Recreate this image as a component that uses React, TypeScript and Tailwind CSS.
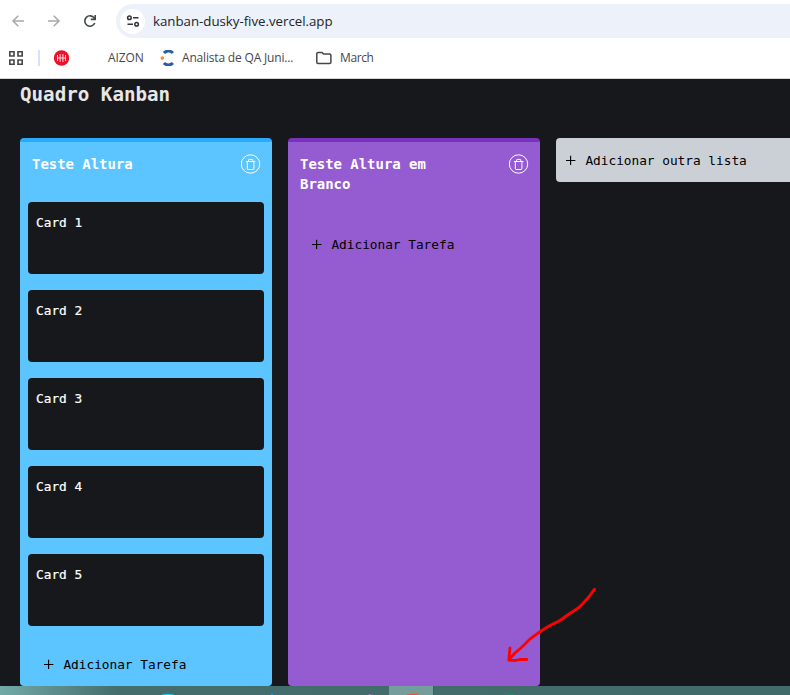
import type { ReactNode } from 'react';

const ui = "font-['Open_Sans','Noto_Sans',sans-serif]";

function TrashButton() {
  return (
    <button aria-label="Excluir lista" className="h-5 w-5 shrink-0 text-white">
      <svg width="20" height="20" viewBox="0 0 20 20" fill="none" stroke="currentColor">
        <circle cx="9.5" cy="10" r="9.2" />
        <path d="M5 7.5h9.4M6.3 7.5v7.2q0 .8.8.8h5q.8 0 .8-.8V7.5M7.6 7.3V6q0-.6.6-.6h3q.6 0 .6.6v1.3" strokeLinejoin="round" />
      </svg>
    </button>
  );
}

function AddLabel({ children }: { children: ReactNode }) {
  return (
    <span className="flex items-center text-[12.8px] leading-5 tracking-[-0.02px] text-black">
      <svg width="10" height="10" viewBox="0 0 10 10" className="mr-[9.4px] shrink-0" stroke="currentColor" strokeWidth="1.1">
        <path d="M0 5.5h9.4M4.6 .8v9.2" />
      </svg>
      <span className="pt-0.5 whitespace-pre">{children}</span>
    </span>
  );
}

function Column({ title, cards, tone }: { title: string; cards: string[]; tone: string }) {
  return (
    <section className={`flex h-[548px] w-[252px] shrink-0 flex-col rounded-[4px] border-t-4 ${tone}`}>
      <header className="flex items-start justify-between pt-3 pr-[11px] pl-3">
        <h2 className="w-[180px] text-[14px] leading-5 font-bold tracking-[-0.04px] text-white">{title}</h2>
        <TrashButton />
      </header>
      <div className="mt-7 flex flex-col gap-4 px-2">
        {cards.map((card) => (
          <article key={card} className="h-[72px] rounded-[4px] bg-[#17181c] px-2 pt-[11px] text-[12.8px] leading-5 font-medium text-white [-webkit-text-stroke:0.2px_white]">
            {card}
          </article>
        ))}
      </div>
      <button className={cards.length ? 'mt-[27px] pl-6' : 'mt-[11px] pl-6'}>
        <AddLabel>Adicionar Tarefa</AddLabel>
      </button>
    </section>
  );
}

function Browser() {
  return (
    <div className={`h-[79px] border-b border-[#d7d7d7] bg-white ${ui}`}>
      <div className="flex h-[42px] items-center">
        <svg width="116" height="42" viewBox="0 0 116 42" fill="none" strokeWidth="1.5">
          <path d="M24 21H13M18.3 15.7L13 21l5.3 5.3M48 21h11M53.7 15.7L59 21l-5.3 5.3" stroke="#a7a9ab" />
          <path d="M94.3 18.1A5.2 5.2 0 1 0 94.8 23M95.2 15v4.4h-4.4" stroke="#44474a" strokeWidth="1.6" />
        </svg>
        <div className="flex h-[34px] flex-1 items-center rounded-l-full bg-[#ecf1fa] pl-1">
          <div className="flex h-[25px] w-[25px] items-center justify-center rounded-full bg-white">
            <svg width="14" height="14" viewBox="0 0 14 14" fill="none" stroke="#303236" strokeWidth="1.5">
              <circle cx="3.4" cy="3.7" r="1.8" />
              <path d="M7 3.7h5.5M1.5 10.2H7" />
              <circle cx="10.6" cy="10.2" r="1.8" />
            </svg>
          </div>
          <span className="ml-2 text-[13.3px] leading-5 tracking-[-0.03px] text-[#222428]">kanban-dusky-five.vercel.app</span>
        </div>
      </div>
      <div className="flex h-8 items-center text-[12px] text-[#45484c]">
        <svg width="16" height="16" viewBox="0 0 16 16" className="ml-2" fill="none" stroke="#44474a" strokeWidth="1.6">
          <path d="M1.8 1.8h4.2v4.2h-4.2zM10 1.8h4.2v4.2h-4.2zM1.8 10h4.2v4.2h-4.2zM10 10h4.2v4.2h-4.2z" />
        </svg>
        <span className="ml-[14px] h-4 w-0.5 bg-[#d3e3fd]" />
        <svg width="16" height="16" viewBox="0 0 16 16" className="ml-[13px]">
          <circle cx="8.5" cy="8" r="7.7" fill="#ed1029" />
          <path d="M4.5 5v6M7.1 4v8M9.9 4v8M12.5 5v6M4.5 8h8" stroke="#fff" strokeWidth=".85" />
        </svg>
        <span className="ml-[39px] w-[36px] tracking-[-0.1px]">AIZON</span>
        <svg width="16" height="16" viewBox="0 0 16 16" className="ml-4" fill="none" stroke="#2e5ba7" strokeWidth="3">
          <path d="M3.9 3.1a6.2 6.2 0 0 1 9-.1M3.9 12.9a6.2 6.2 0 0 0 9 .1" />
          <circle cx="2.3" cy="8" r="1.8" fill="#ff8a2b" stroke="none" />
        </svg>
        <span className="ml-1.5 w-[112px] whitespace-nowrap tracking-[-0.18px]">Analista de QA Juni...</span>
        <svg width="16" height="14" viewBox="0 0 16 14" className="ml-[22px]" fill="none" stroke="#44474a" strokeWidth="1.5">
          <path d="M.8 2.6q0-1.2 1.2-1.2h4l1.6 1.7h6q1.3 0 1.3 1.2v6.9q0 1.2-1.3 1.2H2q-1.2 0-1.2-1.2z" />
        </svg>
        <span className="ml-2 tracking-[-0.4px]">March</span>
      </div>
    </div>
  );
}

export default function App() {
  return (
    <div className="relative flex h-[695px] w-[790px] flex-col overflow-hidden bg-[#17181c] font-['DejaVu_Sans_Mono','Liberation_Mono',monospace]">
      <Browser />
      <main className="h-[607px] shrink-0 pl-5">
        <h1 className="pt-[3px] text-[19.2px] leading-[26px] font-bold text-[#e7e7e7]">Quadro Kanban</h1>
        <div className="mt-[30px] flex w-[820px] items-start gap-4">
          <Column title="Teste Altura" cards={['Card 1', 'Card 2', 'Card 3', 'Card 4', 'Card 5']} tone="border-[#29aaff] bg-[#5cc4ff]" />
          <Column title="Teste Altura em Branco" cards={[]} tone="border-[#7832bd] bg-[#955bd1]" />
          <button className="flex h-11 w-[252px] shrink-0 items-center rounded-[4px] bg-[#cbd0d7] pl-[10px]">
            <AddLabel>Adicionar outra lista</AddLabel>
          </button>
        </div>
      </main>
      <footer className="flex h-[9px] bg-linear-to-r from-[#72aaa8] via-[#446d6d] via-15% to-[#416a6a]">
        <svg width="790" height="9" viewBox="0 0 790 9">
          <path d="M389 0h44v9h-44z" fill="#759d9c" />
          <path d="M433.5 0v9" stroke="#425e5e" />
          <ellipse cx="168" cy="10" rx="7" ry="2.3" fill="#16c9e8" />
          <circle cx="272" cy="9" r="1.5" fill="#238fd8" />
          <circle cx="370" cy="9.5" r="1.5" fill="#b57ad1" />
          <ellipse cx="413" cy="10" rx="7" ry="2.3" fill="#e84b40" />
          <ellipse cx="511" cy="10" rx="5" ry="1.8" fill="#24936c" />
        </svg>
      </footer>
      <svg className="pointer-events-none absolute top-[580px] left-[490px]" width="120" height="90" viewBox="0 0 120 90" fill="none" stroke="#ff0000" strokeWidth="2.8" strokeLinecap="round" strokeLinejoin="round">
        <path d="M104.5 9.2L99.5 16 93 23.5 89 27.5 79 34 70 40.5 59 46 51 51 40 59 32 67 25 73 19 79.5M20 68l-1.2 12.2 6.5.3 5-1.2 6.5.2" />
      </svg>
    </div>
  );
}
